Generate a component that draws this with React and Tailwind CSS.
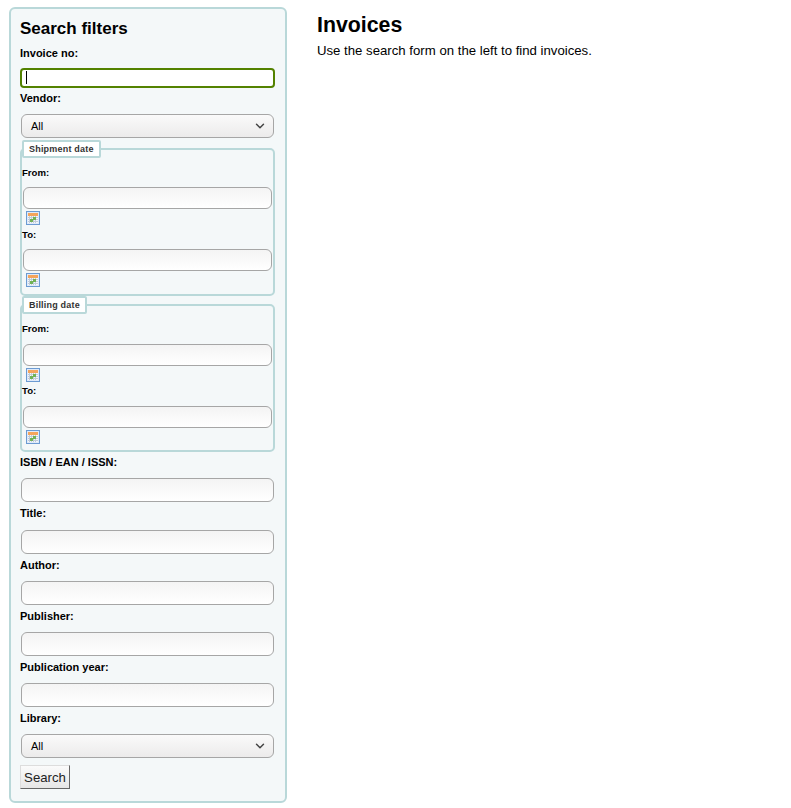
import { ChevronDown } from 'lucide-react'

const fieldClass =
  'mx-[1px] block rounded-[6px] border border-[#a6a6a6] bg-gradient-to-b from-[#f4f4f4] to-white outline-none'

function Label({ children, className = 'text-[11px]' }) {
  return <label className={`block h-[13px] leading-[13px] font-bold text-black ${className}`}>{children}</label>
}

function CalendarIcon() {
  return (
    <svg width="14" height="14" viewBox="0 0 14 14" className="ml-[4px] block">
      <rect x="0.5" y="0.5" width="13" height="13" fill="#dfeafa" stroke="#6c9bd2" />
      <rect x="2" y="2" width="10" height="3" fill="#f5a55c" />
      <rect x="2" y="5" width="10" height="7" fill="#f4f7fb" />
      <path d="M2 6.5h10M2 8.5h10M2 10.5h10M3.5 5v7M5.5 5v7M7.5 5v7M9.5 5v7" stroke="#c2ccd8" strokeWidth="1" />
      <rect x="7" y="6" width="3" height="3" fill="#72b356" />
      <rect x="4" y="8" width="3" height="3" fill="#72b356" />
    </svg>
  )
}

function SelectAll({ className = '' }) {
  return (
    <div className={`mx-[1px] flex h-[24px] w-[253px] items-center justify-between rounded-[6px] border border-[#a6a6a6] bg-gradient-to-b from-[#fafafa] to-[#ecebeb] pr-[6px] pl-[9px] text-[11px] text-black ${className}`}>
      <span>All</span>
      <ChevronDown size={14} strokeWidth={2.5} className="text-[#444444]" />
    </div>
  )
}

function DateField({ label, className, inputGap }) {
  return (
    <div className={className}>
      <Label className="text-[9.6px]">{label}</Label>
      <input className={`${fieldClass} h-[22px] w-[249px] ${inputGap}`} />
      <div className="mt-[2px]">
        <CalendarIcon />
      </div>
    </div>
  )
}

function DateGroup({ title, className = '', inputGap, toGap }) {
  return (
    <fieldset className={`h-[156px] w-[255px] rounded-[5px] border-2 border-[#b9d8d9] ${className}`}>
      <legend className="h-[18px] rounded-[2px] border-2 border-[#b9d8d9] bg-white px-[5px] text-[9px] leading-[14px] font-bold tracking-[0.2px] text-[#333333]">
        {title}
      </legend>
      <DateField label="From:" className="mt-[8px]" inputGap={inputGap} />
      <DateField label="To:" className={toGap} inputGap={inputGap} />
    </fieldset>
  )
}

function TextRow({ label, className = '', inputGap = 'mt-[9px]' }) {
  return (
    <div className={className}>
      <Label>{label}</Label>
      <input className={`${fieldClass} h-[24px] w-[253px] ${inputGap}`} />
    </div>
  )
}

function App() {
  return (
    <div className="flex min-h-[808px] items-start bg-white font-['Liberation_Sans',Arial,sans-serif] text-black">
      <aside className="mt-[7px] ml-[9px] h-[796px] w-[278px] shrink-0 rounded-[6px] border-2 border-[#b9d8d9] bg-[#f4f8f9] pt-[10px] pl-[9px]">
        <h4 className="text-[17px] leading-[20px] font-bold">Search filters</h4>
        <Label className="mt-[8px] text-[11px]">Invoice no:</Label>
        <div className="relative mt-[8px] w-[255px]">
          <input className="block h-[20px] w-[255px] rounded-[4px] border-2 border-[#538200] bg-white outline-none" />
          <span className="absolute top-[3px] left-[6px] h-[13px] w-px bg-black" />
        </div>
        <Label className="mt-[4px] text-[11px]">Vendor:</Label>
        <SelectAll className="mt-[9px]" />
        <DateGroup title="Shipment date" className="mt-[2px]" inputGap="mt-[8px]" toGap="mt-[3px]" />
        <DateGroup title="Billing date" inputGap="mt-[9px]" toGap="mt-[2px]" />
        <TextRow label="ISBN / EAN / ISSN:" className="mt-[4px]" />
        <TextRow label="Title:" className="mt-[5px]" inputGap="mt-[10px]" />
        <TextRow label="Author:" className="mt-[5px]" />
        <TextRow label="Publisher:" className="mt-[5px]" />
        <TextRow label="Publication year:" className="mt-[5px]" />
        <Label className="mt-[5px] text-[11px]">Library:</Label>
        <SelectAll className="mt-[9px]" />
        <button className="mt-[7px] block h-[24px] w-[50px] border border-t-[#dddddd] border-r-[#666666] border-b-[#666666] border-l-[#dddddd] bg-gradient-to-b from-[#fbfbfb] to-[#e6e6e6] pt-[1px] text-[13.2px] text-[#222222]">
          Search
        </button>
      </aside>
      <main className="ml-[30px] pt-[13px]">
        <h1 className="text-[21.3px] leading-[24px] font-bold">Invoices</h1>
        <p className="mt-[6px] text-[13.2px] leading-[15px]">Use the search form on the left to find invoices.</p>
      </main>
    </div>
  )
}

export default App
